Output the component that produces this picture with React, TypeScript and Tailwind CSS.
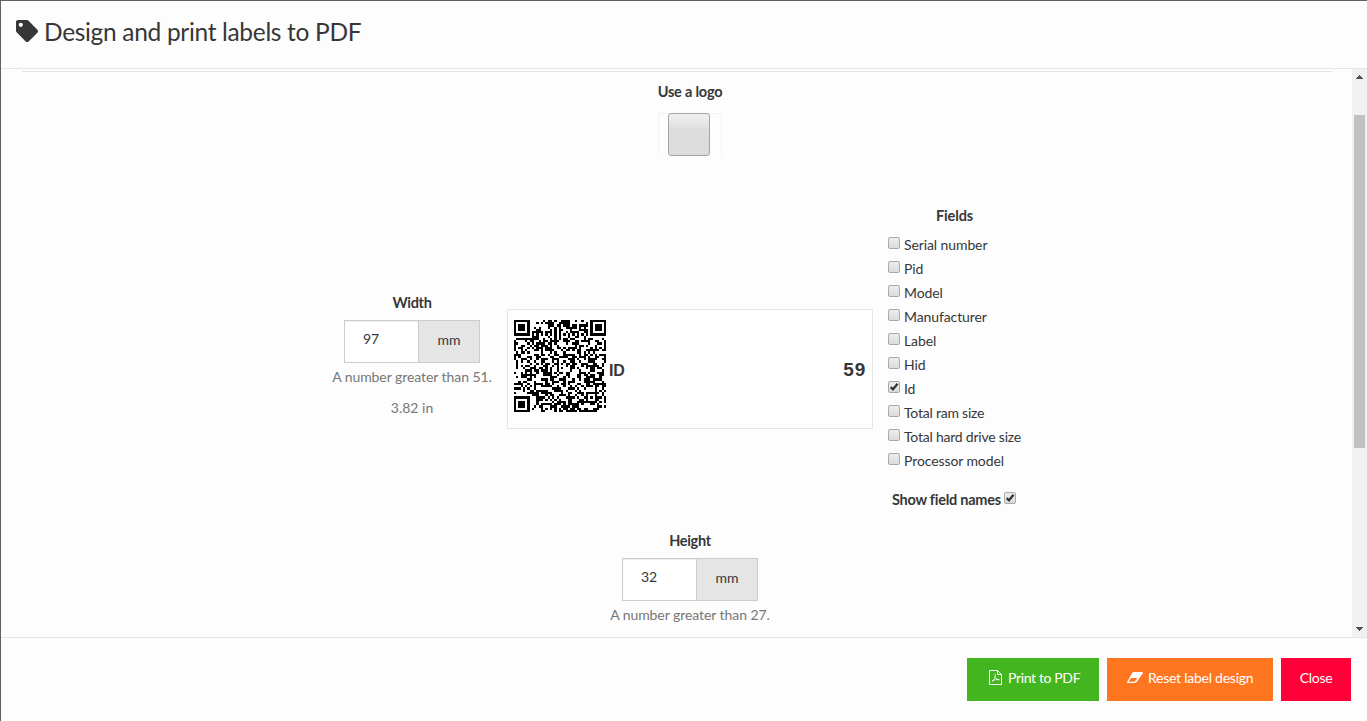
import React from 'react';
import { FaTag } from 'react-icons/fa';

const N = 41;

function finder(x: number, y: number): boolean | null {
  for (const [fx, fy] of [[0, 0], [N - 7, 0], [0, N - 7]]) {
    const dx = x - fx;
    const dy = y - fy;
    if (dx >= -1 && dx <= 7 && dy >= -1 && dy <= 7) {
      const d = Math.max(Math.abs(dx - 3), Math.abs(dy - 3));
      return d === 3 || d <= 1;
    }
  }
  return null;
}

// Placeholder QR code: the finder, timing and alignment patterns are real,
// the data modules are seeded filler and encode nothing, so it does not scan.
function buildPlaceholderCode(): string {
  let seed = 59;
  let path = '';
  for (let y = 0; y < N; y++) {
    for (let x = 0; x < N; x++) {
      seed = (Math.imul(seed, 1103515245) + 12345) & 0x7fffffff;
      let on = ((seed >> 16) & 1) === 1;
      const f = finder(x, y);
      const a = Math.max(Math.abs(x - 34), Math.abs(y - 34));
      if (f !== null) on = f;
      else if (a <= 2) on = a !== 1;
      else if (x === 6 || y === 6) on = (x + y) % 2 === 0;
      if (on) {
        const x0 = Math.round((x * 92) / N);
        const x1 = Math.round(((x + 1) * 92) / N);
        const y0 = Math.round((y * 92) / N);
        const y1 = Math.round(((y + 1) * 92) / N);
        path += `M${x0} ${y0}H${x1}V${y1}H${x0}z`;
      }
    }
  }
  return path;
}

const CODE = buildPlaceholderCode();

const FIELDS = [
  'Serial number', 'Pid', 'Model', 'Manufacturer', 'Label', 'Hid', 'Id',
  'Total ram size', 'Total hard drive size', 'Processor model',
];

function Check({ checked = false }: { checked?: boolean }) {
  return (
    <span className="block h-3 w-3 shrink-0 rounded-[2px] border border-[#a9a9a9] bg-linear-to-b from-[#ededed] to-[#dcdcdc]">
      {checked && (
        <svg viewBox="0 0 10 10" className="block h-[10px] w-[10px]">
          <path d="M1.7 5.2 4 7.4 8.5 1.8" fill="none" stroke="#333" strokeWidth="2.3" />
        </svg>
      )}
    </span>
  );
}

function Dimension({ title, value, hint }: { title: string; value: string; hint: string }) {
  return (
    <div className="flex w-[160px] flex-col items-center">
      <div className="h-5 text-[14.5px] leading-5 font-bold tracking-[-0.3px]">{title}</div>
      <div className="mt-[7px] flex h-[43px] w-[136px] border border-[#ccc]">
        <div className="w-[73px] bg-white pt-[8px] pl-[18px] shadow-[inset_0_1px_1px_rgba(0,0,0,0.075)]">{value}</div>
        <div className="flex-1 border-l border-[#ccc] bg-[#e5e5e5] pt-[9px] text-center">mm</div>
      </div>
      <div className="mt-1 h-5 whitespace-nowrap tracking-[-0.06px] text-[#777]">{hint}</div>
    </div>
  );
}

export default function App() {
  return (
    <div className="h-[721px] w-[1367px] overflow-hidden border-t border-l border-[#62625c] bg-[#fdfdfd] font-['Lato',sans-serif] text-[14px] leading-5 text-[#373737]">
      <header className="flex h-[68px] items-start border-b border-[#e5e5e5] pt-[17px] pl-[15px]">
        <FaTag className="mt-[2px] h-[22px] w-[22px]" />
        <h1 className="ml-[6px] text-[24.5px] leading-[28px] tracking-[-0.32px] whitespace-nowrap">Design and print labels to PDF</h1>
      </header>

      <main className="flex h-[568px]">
        <div className="flex w-[1351px] flex-col">
          <div className="mt-[2px] ml-[21px] h-px w-[1310px] bg-[#e5e5e5]" />
          <div className="ml-[657px] flex w-16 flex-col items-center pt-[10px]">
            <div className="h-5 text-[14.5px] leading-5 font-bold tracking-[-0.2px] whitespace-nowrap">Use a logo</div>
            <div className="mt-[11px] flex h-[43px] w-16 border-x border-t border-[#f3f3f3] pl-[9px]">
              <div className="-mt-px h-[43px] w-[42px] rounded-[3px] border border-[#a5a5a5] bg-linear-to-b from-[#ededed] from-10% to-[#dcdcdc] to-40%" />
            </div>
          </div>

          <div className="mt-[50px] ml-[331px] flex h-[310px]">
            <div className="pt-[87px]">
              <Dimension title="Width" value="97" hint="A number greater than 51." />
              <div className="mt-[11px] text-center text-[#777]">3.82 in</div>
            </div>
            <div className="mt-[103px] ml-[15px] flex h-[120px] w-[366px] border border-[#e5e5e5] bg-white pt-[10px] pr-[7px] pl-[6px]">
              <svg viewBox="0 0 92 92" className="h-[92px] w-[92px]" shapeRendering="crispEdges">
                <path d={CODE} fill="#000" />
              </svg>
              <div className="ml-[3px] flex h-[102px] flex-1 items-center justify-between font-['Liberation_Sans',sans-serif] font-bold">
                <span className="text-[16px] tracking-[-0.2px]">ID</span>
                <span className="-mt-[2px] -mr-px text-[19px] tracking-[0.8px]">59</span>
              </div>
            </div>
            <div className="ml-[15px] w-[134px]">
              <div className="h-5 pr-px text-center text-[14.5px] leading-5 font-bold tracking-[-0.15px]">Fields</div>
              <div className="mt-[8px]">
                {FIELDS.map((name) => (
                  <div key={name} className="flex h-6 pt-[3px]">
                    <Check checked={name === 'Id'} />
                    <span className={`-mt-[2px] ml-1 whitespace-nowrap ${name.startsWith('Total') ? 'tracking-[-0.22px]' : 'tracking-[-0.1px]'}`}>{name}</span>
                  </div>
                ))}
              </div>
              <div className="mt-[16px] ml-1 flex">
                <span className="w-[109px] text-[14.5px] leading-5 font-bold tracking-[-0.25px] whitespace-nowrap">Show field names</span>
                <span className="mt-[2px] ml-[3px]"><Check checked /></span>
              </div>
            </div>
          </div>
          <div className="mt-[15px] ml-[609px]">
            <Dimension title="Height" value="32" hint="A number greater than 27." />
          </div>
        </div>

        <div className="flex w-[15px] flex-col items-center bg-[#f1f1f1] pt-[6px] pb-[6px]">
          <svg viewBox="0 0 7 4" className="h-1 w-[7px]" shapeRendering="crispEdges">
            <path d="M3 0H4V1H5V2H6V3H7V4H0V3H1V2H2V1H3z" fill="#505050" />
          </svg>
          <div className="mt-9 h-[333px] w-[11px] bg-[#c1c1c1]" />
          <svg viewBox="0 0 7 4" className="mt-auto h-1 w-[7px]" shapeRendering="crispEdges">
            <path d="M0 0H7V1H6V2H5V3H4V4H3V3H2V2H1V1H0z" fill="#505050" />
          </svg>
        </div>
      </main>

      <footer className="flex h-[84px] justify-end gap-2 border-t border-[#e5e5e5] pt-5 pr-4 tracking-[-0.3px] text-white">
        <button className="flex h-[43px] w-[132px] items-start bg-[#43b51f] pt-[10px] pl-[22px]">
          <svg viewBox="0 0 13 15" className="mt-[2px] h-[15px] w-[13px]" fill="none" stroke="white">
            <path d="M.5 .5H8.5L12.5 4.5V14.5H.5zM8.5 .5V4.5H12.5" />
            <path d="M5.8 3.5c1.2 2-.5 6.5-3 8.3M6 6.5c.8 2 2.3 3.3 4.6 3.4M3 11.2c2-1.3 4.5-2 7.4-1.4" strokeWidth=".8" />
          </svg>
          <span className="ml-[6px] tracking-[-0.36px] whitespace-nowrap">Print to PDF</span>
        </button>
        <button className="flex h-[43px] w-[166px] items-start bg-[#ff7621] pt-[10px] pl-5">
          <svg viewBox="0 0 16 11" className="mt-1 h-[11px] w-4">
            <path fillRule="evenodd" fill="white" d="M6.4 0H15.2Q16.3.2 15.7 1.5L9.4 10.2Q8.8 11 8 11H1Q-.4 10.8.3 9.4L5.3.7Q5.7 0 6.4 0zM4 5.9L1.5 9.7H7.6L10.4 5.9z" />
          </svg>
          <span className="ml-[5px] tracking-[-0.25px] whitespace-nowrap">Reset label design</span>
        </button>
        <button className="flex h-[43px] w-[70px] items-start justify-center bg-[#ff0039] pt-[10px]">Close</button>
      </footer>
    </div>
  );
}
